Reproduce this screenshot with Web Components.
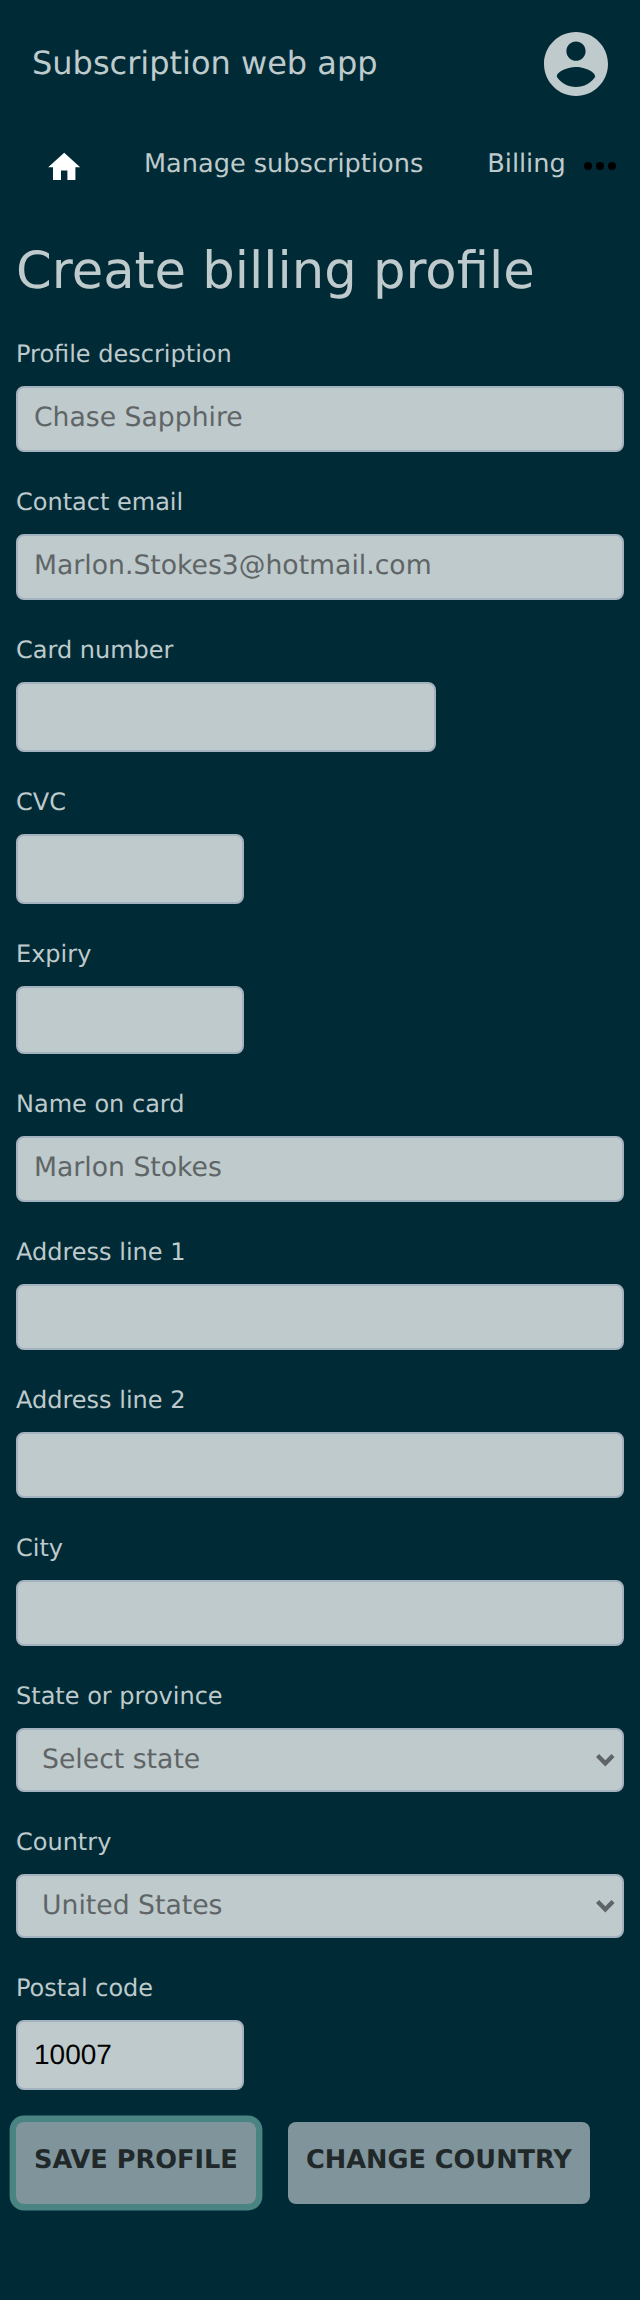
<!DOCTYPE html>
<html lang="en">
<head>
<meta charset="utf-8">
<title>Subscription web app</title>
<style>
html, body { margin: 0; background: #002b36; }
body { min-height: 2300px; color: #bfcacc; font-family: "DejaVu Sans", sans-serif; text-rendering: geometricPrecision; }
</style>
</head>
<body>
<billing-page></billing-page>
<script>
function define(name, html) {
  customElements.define(name, class extends HTMLElement {
    constructor() {
      super();
      const t = document.createElement('template');
      t.innerHTML = html;
      this.attachShadow({ mode: 'open' }).appendChild(t.content.cloneNode(true));
    }
  });
}

define('app-header', `
<style>
:host { display: flex; justify-content: space-between; align-items: flex-start; height: 128px; padding: 0 32px; box-sizing: border-box; }
.title { font-size: 32px; line-height: 38px; margin-top: 44px; }
svg { display: block; width: 64px; height: 64px; margin-top: 32px; fill: currentColor; }
</style>
<div class="title"><slot></slot></div>
<svg viewBox="2 2 20 20" aria-label="Account"><path d="M12 2C6.48 2 2 6.48 2 12s4.48 10 10 10 10-4.48 10-10S17.52 2 12 2zm0 3c1.66 0 3 1.34 3 3s-1.34 3-3 3-3-1.34-3-3 1.34-3 3-3zm0 14.2c-2.5 0-4.71-1.28-6-3.22.03-1.99 4-3.08 6-3.08 1.99 0 5.97 1.09 6 3.08-1.29 1.94-3.5 3.22-6 3.22z"/></svg>`);

define('nav-item', `
<style>
:host { display: block; padding: 21px 32px 0; font-size: 25.6px; line-height: 30px; white-space: nowrap; }
</style>
<slot></slot>`);

define('app-nav', `
<style>
:host { display: flex; align-items: flex-start; height: 112px; padding: 0 16px 0 44.8px; box-sizing: border-box; }
.home { width: 38.4px; height: 38.4px; margin: 20px 28.8px 0 0; fill: #fff; flex: none; }
.more { width: 48px; height: 48px; margin: 14px 0 0 auto; fill: #000; flex: none; }
nav-item:last-of-type { padding-right: 0; }
</style>
<svg class="home" viewBox="0 0 24 24" aria-label="Home"><path d="M10 20v-6h4v6h5v-8h3L12 3 2 12h3v8z"/></svg>
<nav-item>Manage subscriptions</nav-item>
<nav-item>Billing</nav-item>
<svg class="more" viewBox="0 0 24 24" aria-label="More"><circle cx="6" cy="12" r="2"/><circle cx="12" cy="12" r="2"/><circle cx="18" cy="12" r="2"/></svg>`);

define('form-field', `
<style>
:host { display: block; }
.label { font-size: 24px; line-height: 28px; margin-bottom: 18px; }
.box {
  display: flex; justify-content: space-between; box-sizing: border-box;
  width: var(--w, 608px); height: var(--h, 66px); padding: 14px 16px 0;
  background: #bfcacc; border: 2px solid #a4b2c0; border-radius: 8px;
  color: #5f6566; font-size: 26.667px; line-height: 31px; white-space: nowrap;
}
:host([kind=select]) .box { height: 64px; padding-left: 24px; padding-right: 7px; }
:host([kind=hosted]) .box { padding-top: 17px; color: #000; font-family: "Liberation Sans", sans-serif; font-size: 28px; }
svg { display: none; width: 18.6px; height: 12.4px; margin-top: 10.3px; fill: currentColor; }
:host([kind=select]) svg { display: block; }
</style>
<div class="label"><slot name="label"></slot></div>
<div class="box"><span><slot></slot></span><svg viewBox="0 0 18.6 12.4"><path d="M0 3.1 3.1 0 9.3 6.2 15.5 0 18.6 3.1 9.3 12.4z"/></svg></div>`);

define('action-button', `
<style>
:host {
  display: block; box-sizing: border-box; height: 82px; padding: 23px 18px 0;
  background: #80949b; border-radius: 8px; color: #20282a;
  font-size: 25.6px; line-height: 30px; font-weight: bold; white-space: nowrap; text-transform: uppercase;
}
:host([focused]) { box-shadow: 0 0 0 6.4px #4a8482; }
</style>
<slot></slot>`);

define('billing-page', `
<style>
:host { display: block; }
h1 { margin: 0; padding: 1px 16px 0; height: 99px; font-size: 51.2px; line-height: 60px; font-weight: normal; }
form { display: flex; flex-direction: column; gap: 36px; padding: 0 16px; }
.actions { display: flex; gap: 32px; padding: 32px 16px 0; }
.save { width: 240px; }
.change { width: 302px; }
</style>
<app-header>Subscription web app</app-header>
<app-nav></app-nav>
<h1>Create billing profile</h1>
<form>
<form-field><span slot="label">Profile description</span>Chase Sapphire</form-field>
<form-field><span slot="label">Contact email</span>Marlon.Stokes3@hotmail.com</form-field>
<form-field style="--w:420px;--h:70px"><span slot="label">Card number</span></form-field>
<form-field style="--w:228px;--h:70px"><span slot="label">CVC</span></form-field>
<form-field style="--w:228px;--h:68px"><span slot="label">Expiry</span></form-field>
<form-field><span slot="label">Name on card</span>Marlon Stokes</form-field>
<form-field><span slot="label">Address line 1</span></form-field>
<form-field><span slot="label">Address line 2</span></form-field>
<form-field><span slot="label">City</span></form-field>
<form-field kind="select"><span slot="label">State or province</span>Select state</form-field>
<form-field kind="select"><span slot="label">Country</span>United States</form-field>
<form-field kind="hosted" style="--w:228px;--h:70px"><span slot="label">Postal code</span>10007</form-field>
</form>
<div class="actions">
<action-button class="save" focused>Save profile</action-button>
<action-button class="change">Change country</action-button>
</div>`);
</script>
</body>
</html>
